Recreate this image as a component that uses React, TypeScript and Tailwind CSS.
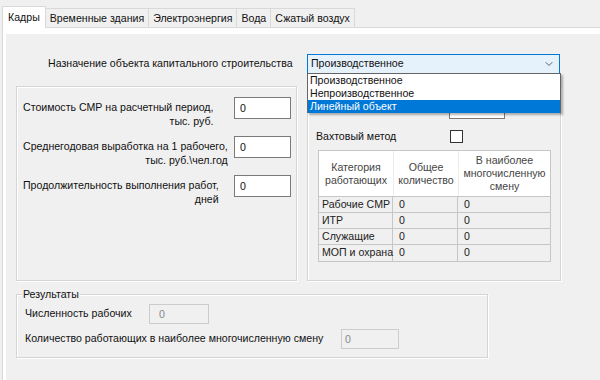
import { ChevronDown } from 'lucide-react';

const tabs = ['Кадры', 'Временные здания', 'Электроэнергия', 'Вода', 'Сжатый воздух'];

const rows = [
  ['Рабочие СМР', '0', '0'],
  ['ИТР', '0', '0'],
  ['Служащие', '0', '0'],
  ['МОП и охрана', '0', '0'],
];

const groupBox = 'border border-[#d5d5d5] shadow-[inset_1px_1px_0_#ffffff,1px_1px_0_#ffffff]';
const textBox = 'border border-[#7a7a7a] bg-white pl-[5px] pt-[3px]';

const InputRow = ({ lines, value }: { lines: string[]; value: string }) => (
  <div className="flex items-start h-[39px]">
    <div className="w-[217px] pl-[6px] pt-[3px]">
      <div className="inline-block text-right leading-[14px]">
        {lines.map((l) => (
          <div key={l}>{l}</div>
        ))}
      </div>
    </div>
    <div className={`${textBox} w-[57px] h-[22px]`}>{value}</div>
  </div>
);

const App = () => {
  return (
    <div className="w-[600px] h-[380px] overflow-hidden whitespace-nowrap bg-[#f0f0f0] text-[10.6px] text-[#111] font-['Liberation_Sans',Arial,sans-serif] flex flex-col">
      {/* Tabs */}
      <div className="flex items-end pl-[2px] pt-[6px] h-[27px]">
        {tabs.map((t, i) =>
          i === 0 ? (
            <div
              key={t}
              className="relative z-10 -mb-px h-[22px] px-[5px] pt-[3px] bg-white border border-b-0 border-[#d9d9d9]"
            >
              {t}
            </div>
          ) : (
            <div
              key={t}
              className="h-[19px] px-[4px] pt-[2px] bg-[#f0f0f0] border border-l-0 border-b-0 border-[#d9d9d9]"
            >
              {t}
            </div>
          ),
        )}
      </div>

      {/* Tab page */}
      <div className="flex-1 ml-[2px] border-t border-l border-[#d9d9d9] bg-white pl-[3px] pt-[6px]">
        <div className="relative h-full bg-[#f0f0f0]">
          {/* Purpose row */}
          <div className="flex items-center pt-[20px]">
            <div className="w-[301px] pl-[42px]">Назначение объекта капитального строительства</div>
            <div className="flex items-center justify-between w-[253px] h-[20px] border border-[#0078d7] bg-[#e5f1fb] pl-[3px] pr-[4px]">
              <span>Производственное</span>
              <ChevronDown className="w-[12px] h-[12px] text-[#333]" strokeWidth={1.5} />
            </div>
          </div>

          {/* Two group boxes */}
          <div className="flex mt-[12px] pl-[10px] gap-[10px]">
            <div className={`${groupBox} w-[281px] h-[195px] pt-[10px]`}>
              <InputRow lines={['Стоимость СМР на расчетный период,', 'тыс. руб.']} value="0" />
              <InputRow lines={['Среднегодовая выработка на 1 рабочего,', 'тыс. руб.\\чел.год']} value="0" />
              <InputRow lines={['Продолжительность выполнения работ,', 'дней']} value="0" />
            </div>

            <div className={`${groupBox} w-[254px] h-[195px] pt-[10px]`}>
              <div className="flex justify-end pr-[55px]">
                <div className={`${textBox} w-[56px] h-[22px]`}>0</div>
              </div>
              <div className="flex items-center h-[13px] mt-[11px] pl-[8px]">
                <span className="w-[134px]">Вахтовый метод</span>
                <span className="w-[13px] h-[13px] border border-[#333] bg-white" />
              </div>
              <div className="ml-[10px] mt-[7px] w-[233px] border border-[#c6c6c6] text-[#222]">
                <div className="flex h-[46px] bg-white text-[#444] text-center leading-[13px] border-b border-[#c6c6c6]">
                  <div className="w-[74px] flex items-center justify-center">
                    Категория
                    <br />
                    работающих
                  </div>
                  <div className="w-[65px] flex items-center justify-center border-l border-[#ececec]">
                    Общее
                    <br />
                    количество
                  </div>
                  <div className="flex-1 flex items-center justify-center border-l border-[#ececec]">
                    В наиболее
                    <br />
                    многочисленную
                    <br />
                    смену
                  </div>
                </div>
                {rows.map((r, i) => (
                  <div
                    key={r[0]}
                    className={`flex h-[16px] items-center ${i < rows.length - 1 ? 'border-b border-[#c6c6c6]' : ''}`}
                  >
                    <div className="w-[74px] pl-[3px] border-r border-[#c6c6c6] h-full flex items-center">{r[0]}</div>
                    <div className="w-[65px] pl-[6px] border-r border-[#c6c6c6] h-full flex items-center">{r[1]}</div>
                    <div className="flex-1 pl-[6px]">{r[2]}</div>
                  </div>
                ))}
              </div>
            </div>
          </div>

          {/* Results */}
          <div className={`${groupBox} relative ml-[10px] mt-[13px] w-[472px] h-[64px] pl-[8px] pt-[9px]`}>
            <span className="absolute -top-[8px] left-[5px] px-[1px] bg-[#f0f0f0]">Результаты</span>
            <div className="flex items-center h-[20px]">
              <span className="w-[124px]">Численность рабочих</span>
              <div className="w-[60px] h-[20px] border border-[#cccccc] bg-[#f0f0f0] pl-[9px] pt-[2px] text-[#8a8a8a]">0</div>
            </div>
            <div className="flex items-center h-[20px] mt-[5px]">
              <span className="w-[316px]">Количество работающих в наиболее многочисленную смену</span>
              <div className="w-[58px] h-[20px] border border-[#cccccc] bg-[#f0f0f0] pl-[3px] pt-[2px] text-[#8a8a8a]">0</div>
            </div>
          </div>

          {/* Open dropdown list */}
          <div className="absolute left-[301px] top-[39px] w-[254px] h-[40px] bg-white border border-[#646464] shadow-[2px_2px_2px_rgba(0,0,0,0.3)] leading-[13px]">
            <div className="pl-[2px]">Производственное</div>
            <div className="pl-[2px]">Непроизводственное</div>
            <div className="pl-[2px] bg-[#0078d7] text-white">Линейный объект</div>
          </div>
        </div>
      </div>
    </div>
  );
};

export default App;
